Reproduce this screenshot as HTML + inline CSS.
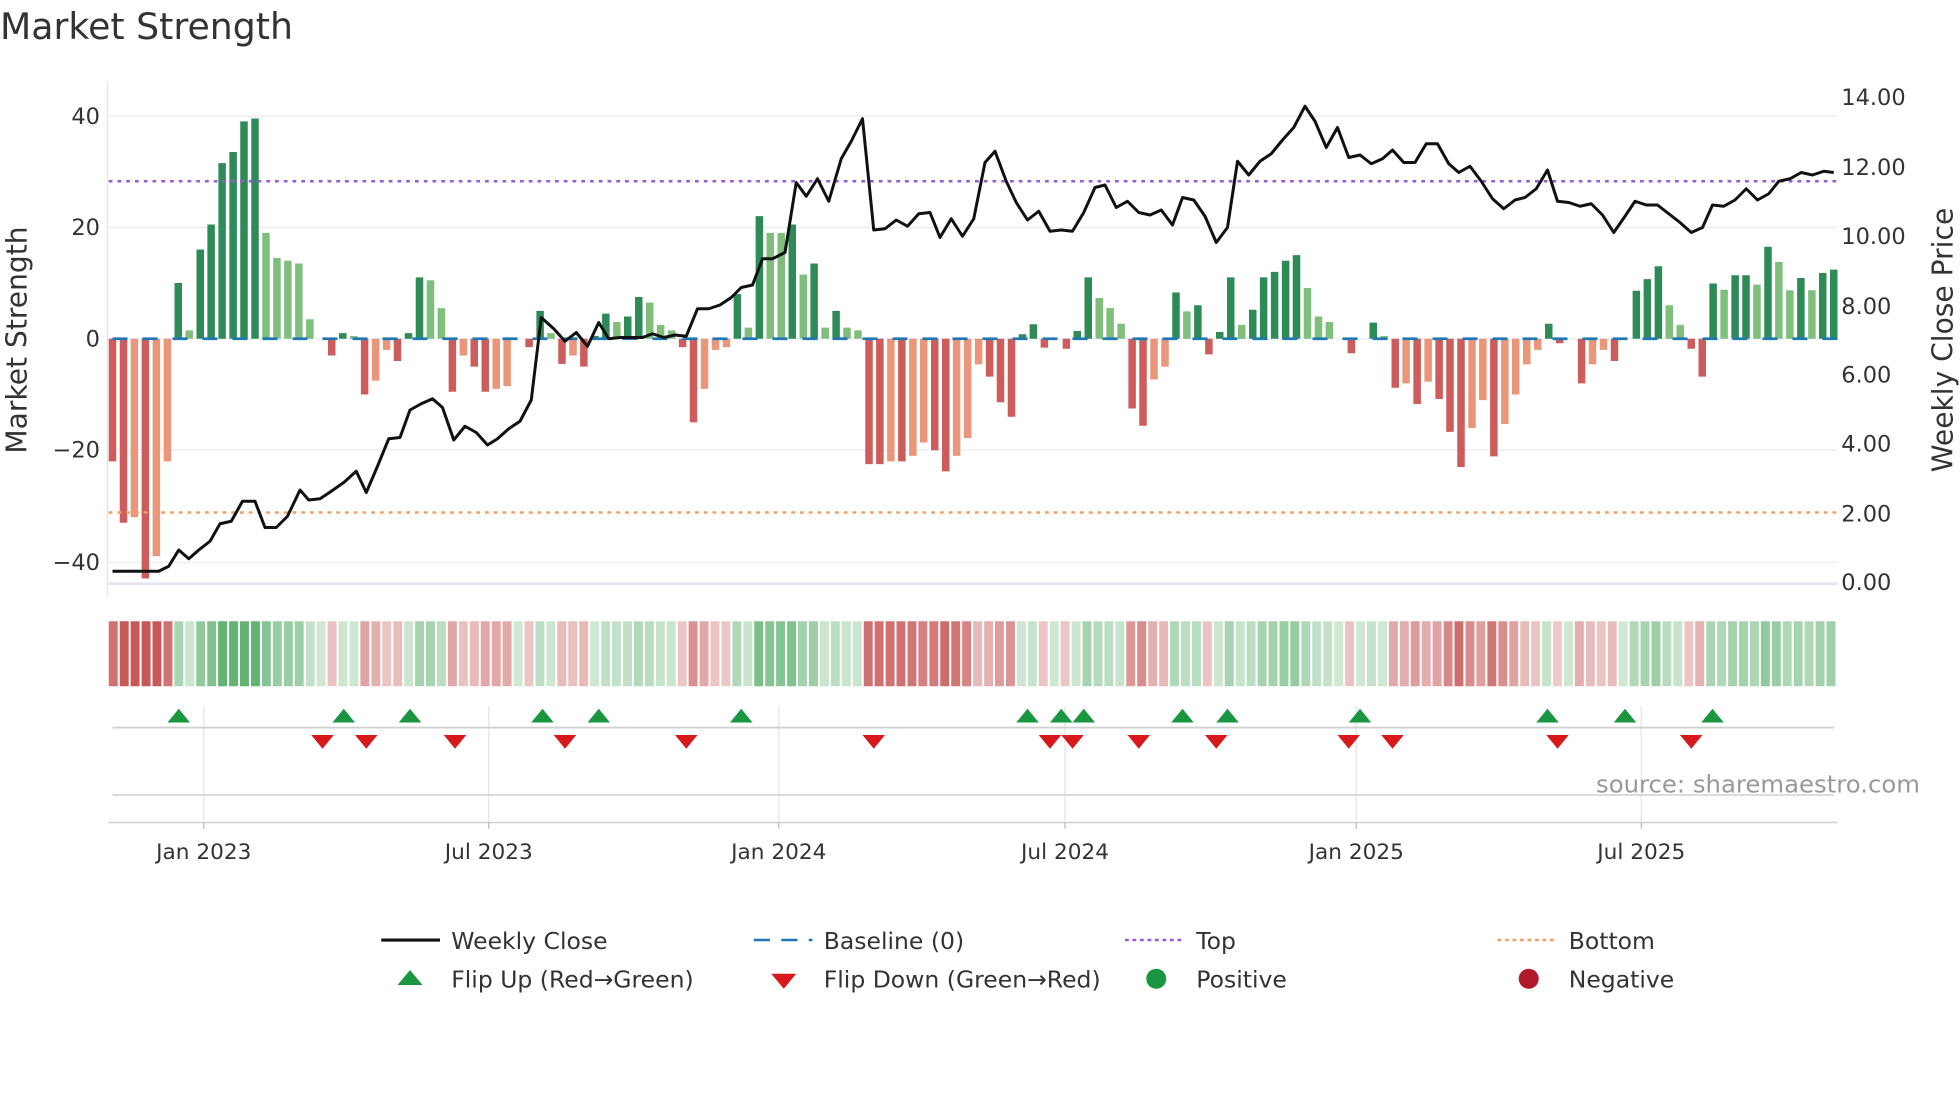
<!DOCTYPE html>
<html><head><meta charset="utf-8"><style>
html,body{margin:0;padding:0;background:#fff;}
svg{display:block;font-family:"DejaVu Sans","Liberation Sans",sans-serif;}
</style></head><body>
<svg id="s" width="1960" height="1102" viewBox="0 0 1568 881.6" xmlns="http://www.w3.org/2000/svg">
<rect width="1568" height="882" fill="#fff"/>
<text x="0" y="31" font-size="29" fill="#333">Market Strength</text>
<g stroke="#eceef3" stroke-width="1.2">
<line x1="87" x2="1470" y1="93" y2="93"/><line x1="87" x2="1470" y1="182" y2="182"/>
<line x1="87" x2="1470" y1="271" y2="271"/><line x1="87" x2="1470" y1="360" y2="360"/>
<line x1="87" x2="1470" y1="450" y2="450"/>
</g>
<line x1="86" x2="86" y1="65" y2="478" stroke="#e6e6ee" stroke-width="1.2"/>
<line x1="87" x2="1470" y1="467" y2="467" stroke="#e6e6f2" stroke-width="2.5"/>
<g font-size="18" fill="#333" text-anchor="end">
<text x="80" y="99">40</text><text x="80" y="188">20</text><text x="80" y="277">0</text>
<text x="80" y="366">−20</text><text x="80" y="456">−40</text>
</g>
<g font-size="18" fill="#333">
<text x="1473" y="84">14.00</text><text x="1473" y="140">12.00</text><text x="1473" y="195">10.00</text>
<text x="1473" y="251">8.00</text><text x="1473" y="306">6.00</text><text x="1473" y="361">4.00</text>
<text x="1473" y="417">2.00</text><text x="1473" y="472">0.00</text>
</g>
<text transform="translate(21,272) rotate(-90)" font-size="22.5" fill="#333" text-anchor="middle">Market Strength</text>
<text transform="translate(1562,272) rotate(-90)" font-size="22.5" fill="#333" text-anchor="middle">Weekly Close Price</text>
<g id="bars"></g>
<line x1="87" x2="1470" y1="271" y2="271" stroke="#1f77b4" stroke-width="2.2" stroke-dasharray="12,12" stroke-dashoffset="-3"/>
<line x1="87" x2="1470" y1="145" y2="145" stroke="#9b59d6" stroke-width="2" stroke-dasharray="3,4"/>
<line x1="87" x2="1470" y1="410" y2="410" stroke="#f0a060" stroke-width="2" stroke-dasharray="3,4"/>
<polyline id="price" fill="none" stroke="#111" stroke-width="2.4" stroke-linejoin="round"/>
<g id="heat"></g>
<g stroke="#e8e8e8" stroke-width="1.2">
<line x1="163" x2="163" y1="565" y2="658"/><line x1="391" x2="391" y1="565" y2="658"/>
<line x1="623" x2="623" y1="565" y2="658"/><line x1="852" x2="852" y1="565" y2="658"/>
<line x1="1085" x2="1085" y1="565" y2="658"/><line x1="1313" x2="1313" y1="565" y2="658"/>
</g>
<line x1="90" x2="1467" y1="582" y2="582" stroke="#d0d0d0" stroke-width="1.5"/>
<line x1="90" x2="1467" y1="636" y2="636" stroke="#d0d0d0" stroke-width="1.2"/>
<line x1="87" x2="1470" y1="658" y2="658" stroke="#cfcfcf" stroke-width="1.2"/>
<g stroke="#bbb"><line x1="163" x2="163" y1="658" y2="663"/><line x1="391" x2="391" y1="658" y2="663"/><line x1="623" x2="623" y1="658" y2="663"/><line x1="852" x2="852" y1="658" y2="663"/><line x1="1085" x2="1085" y1="658" y2="663"/><line x1="1313" x2="1313" y1="658" y2="663"/></g>
<g id="tri"></g>
<text x="1536" y="634" font-size="19.5" fill="#999" text-anchor="end">source: sharemaestro.com</text>
<g font-size="17.3" fill="#333" text-anchor="middle">
<text x="163" y="687">Jan 2023</text><text x="391" y="687">Jul 2023</text><text x="623" y="687">Jan 2024</text>
<text x="852" y="687">Jul 2024</text><text x="1085" y="687">Jan 2025</text><text x="1313" y="687">Jul 2025</text>
</g>
<g font-size="18.8" fill="#333">
<line x1="305" x2="352" y1="752" y2="752" stroke="#111" stroke-width="2.5"/><text x="361" y="759">Weekly Close</text>
<line x1="603" x2="650" y1="752" y2="752" stroke="#1f77b4" stroke-width="2" stroke-dasharray="13,9"/><text x="659" y="759">Baseline (0)</text>
<line x1="900" x2="947" y1="752" y2="752" stroke="#9b59d6" stroke-width="2" stroke-dasharray="3,3"/><text x="957" y="759">Top</text>
<line x1="1198" x2="1245" y1="752" y2="752" stroke="#f0a060" stroke-width="2" stroke-dasharray="3,3"/><text x="1255" y="759">Bottom</text>
<polygon points="318,788 338,788 328,776" fill="#1a9641"/><text x="361" y="790">Flip Up (Red→Green)</text>
<polygon points="617,779 637,779 627,791" fill="#d7191c"/><text x="659" y="790">Flip Down (Green→Red)</text>
<circle cx="925" cy="783" r="8" fill="#1a9641"/><text x="957" y="790">Positive</text>
<circle cx="1223" cy="783" r="8" fill="#b2182b"/><text x="1255" y="790">Negative</text>
</g>
</svg>
<script>
var L=[[-22,1],[-33,1],[-32,0],[-43,1],[-39,0],[-22,0],[10,1],[1.5,0],[16,1],[20.5,1],[31.5,1],[33.5,1],[39,1],[39.5,1],[19,0],[14.5,0],[14,0],[13.5,0],[3.5,0],[0,0],[-3,1],[1,1],[0.5,0],[-10,1],[-7.5,0],[-2,0],[-4,1],[1,1],[11,1],[10.5,0],[5.5,0],[-9.5,1],[-3,0],[-5,1],[-9.5,1],[-9,0],[-8.5,0],[0,0],[-1.5,1],[5,1],[1,0],[-4.5,1],[-3,0],[-5,1],[0.5,1],[4.5,1],[3,0],[4,1],[7.5,1],[6.5,0],[2.5,0],[1.5,0],[-1.5,1],[-15,1],[-9,0],[-2,0],[-1.5,0],[8,1],[2,0],[22,1],[19,0],[19,0],[20.5,1],[11.5,0],[13.5,1],[2,0],[5,1],[2,0],[1.5,0],[-22.5,1],[-22.5,1],[-22,0],[-22,1],[-21,0],[-18.6,0],[-20,1],[-23.8,1],[-21,0],[-17.8,0],
[-4.6,0],[-6.8,1],[-11.4,1],[-14,1],[0.8,1],[2.6,1],[-1.6,1],[0,0],[-1.8,1],[1.4,1],[11,1],[7.3,0],[5.5,0],[2.7,0],[-12.5,1],[-15.6,1],[-7.3,0],[-5,0],[8.3,1],[4.9,0],[6,1],[-2.8,1],[1.2,1],[11,1],[2.5,0],[5.2,1],[11,1],[12,1],[14,1],[15,1],[9.1,0],[4,0],[3,0],[0,0],[-2.6,1],[0,0],[2.9,1],[0.5,0],[-8.8,1],[-8,0],[-11.7,1],[-7.7,0],[-10.8,1],[-16.7,1],[-23,1],[-16,0],[-11,0],[-21.1,1],[-15.3,0],[-10,0],[-4.6,0],[-2,0],[2.7,1],[-0.8,1],[0,0],[-8,1],[-4.6,0],[-2,0],[-4,1],[0,0],[8.6,1],[10.7,1],[13,1],[6,0],[2.5,0],[-1.8,1],[-6.8,1],[9.9,1],[8.8,0],[11.4,1],[11.4,1],[9.7,0],[16.5,1],[13.8,0],[8.7,0],[10.9,1],[8.7,0],[11.8,1],[12.4,1]];
var N=L.length,x0=90,x1=1467,sp=(x1-x0)/(N-1),b='',h='';
var hw=(1470-87)/N;
for(var i=0;i<N;i++){var v=L[i][0],d=L[i][1],x=x0+i*sp,y=271-v*4.46;
 var c=v>=0?(d?'#2e8b57':'#7fbf7b'):(d?'#cd5c5c':'#e9967a');
 if(v!=0)b+='<rect x="'+(x-3).toFixed(1)+'" y="'+Math.min(y,271).toFixed(1)+'" width="6" height="'+Math.abs(v*4.46).toFixed(1)+'" fill="'+c+'"/>';
 var a=Math.min(1,0.3+Math.abs(v)/40*1.0), hc=v>=0?'rgba(60,160,80,'+(a*0.8).toFixed(2)+')':'rgba(190,60,60,'+(a*0.85).toFixed(2)+')';
 if(v==0)hc='rgba(120,190,130,0.35)';
 h+='<rect x="'+(87+i*hw).toFixed(1)+'" y="497" width="'+(hw-1.6).toFixed(2)+'" height="52" fill="'+hc+'"/>';}
document.getElementById('bars').innerHTML=b;document.getElementById('heat').innerHTML=h;
var P=[[90,457],[127,457],[135,453],[143,440],[151,447],[159,440],[168,433],[176,419],[185,417],[194,401],[204,401],[212,422],[221,422],[230,413],[240,392],[247,400],[256,399],[265,393],[275,386],[285,377],[293,394],[302,373],[311,351],[320,350],[328,328],[337,323],[346,319],[354,326],[363,352],[372,341],[381,346],[390,356],[398,351],[407,343],[416,337],[425,320],[433,254],[443,263],[452,273],[461,266],[470,277],[479,258],[487,271],[496,270],[505,270],[514,270],[522,267],[531,270],[540,268],[549,269],[558,247],[567,247],[576,244],[585,238],[593,230],[602,228],[610,207],[618,207],[628,202],[637,146],[645,157],[654,143],[663,161],[673,127],[681,113],[690,95],[699,184],[708,183],[717,176],[726,181],[735,171],[744,170],[752,190],[761,175],[770,189],[779,175],[788,130],[796,121],[805,145],[813,162],[822,176],[831,169],[840,185],[849,184],[858,185],[867,170],[876,150],[884,148],[893,166],[902,161],[911,170],[920,172],[929,168],[938,180],[946,158],[955,160],[964,173],[973,194],[982,182],[990,129],[999,140],[1008,129],[1017,123],[1026,112],[1035,102],[1044,85],[1052,97],[1061,118],[1070,102],[1079,126],[1088,124],[1097,131],[1106,127],[1114,120],[1123,130],[1132,130],[1141,115],[1150,115],[1159,131],[1167,138],[1176,133],[1185,145],[1194,159],[1203,167],[1212,160],[1220,158],[1229,151],[1238,136],[1246,161],[1255,162],[1264,165],[1273,163],[1282,172],[1291,186],[1300,173],[1308,161],[1317,164],[1326,164],[1335,171],[1344,178],[1353,186],[1362,182],[1370,164],[1379,165],[1388,160],[1397,151],[1406,160],[1415,155],[1423,145],[1432,143],[1441,138],[1450,140],[1459,137],[1467,138]];
document.getElementById('price').setAttribute('points',P.map(function(p){return p.join(',')}).join(' '));
var U=[143,275,328,434,479,593,822,849,867,946,982,1088,1238,1300,1370],D=[258,293,364,452,549,699,840,858,911,973,1079,1114,1246,1353],t='';
U.forEach(function(x){t+='<polygon points="'+(x-9)+',578 '+(x+9)+',578 '+x+',567" fill="#1a9641"/>';});
D.forEach(function(x){t+='<polygon points="'+(x-9)+',588 '+(x+9)+',588 '+x+',599" fill="#d7191c"/>';});
document.getElementById('tri').innerHTML=t;
</script>
</body></html>
